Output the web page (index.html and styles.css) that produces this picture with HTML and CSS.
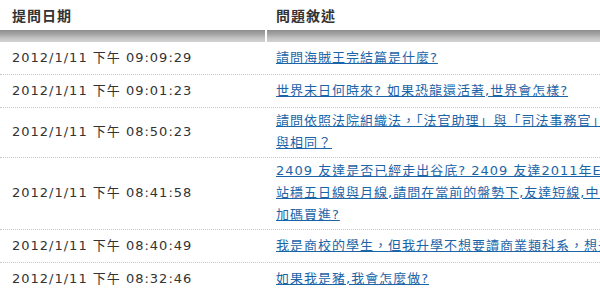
FILE: index.html
```html
<!DOCTYPE html>
<html lang="zh-Hant">
<head>
<meta charset="utf-8">
<title>問題列表</title>
<link rel="stylesheet" href="styles.css">
</head>
<body>
<div class="board">
  <div class="line head">
    <div class="cell-date">提問日期</div>
    <div class="cell-q">問題敘述</div>
  </div>
  <div class="line bar">
    <div class="bar-seg"></div>
    <div class="bar-seg"></div>
  </div>
  <div class="line row">
    <div class="cell-date">2012/1/11 下午 09:09:29</div>
    <div class="cell-q"><a href="#">請問海賊王完結篇是什麼?</a></div>
  </div>
  <div class="line row">
    <div class="cell-date">2012/1/11 下午 09:01:23</div>
    <div class="cell-q"><a href="#">世界末日何時來? 如果恐龍還活著,世界會怎樣?</a></div>
  </div>
  <div class="line row">
    <div class="cell-date">2012/1/11 下午 08:50:23</div>
    <div class="cell-q"><a href="#">請問依照法院組織法，「法官助理」與「司法事務官」的工作有何不同<br>與相同？</a></div>
  </div>
  <div class="line row">
    <div class="cell-date">2012/1/11 下午 08:41:58</div>
    <div class="cell-q"><a href="#">2409 友達是否已經走出谷底? 2409 友達2011年EPS虧損，近日股價<br>站穩五日線與月線,請問在當前的盤勢下,友達短線,中長線是否值得<br>加碼買進?</a></div>
  </div>
  <div class="line row">
    <div class="cell-date">2012/1/11 下午 08:40:49</div>
    <div class="cell-q"><a href="#">我是商校的學生，但我升學不想要讀商業類科系，想去讀設計</a></div>
  </div>
  <div class="line row">
    <div class="cell-date">2012/1/11 下午 08:32:46</div>
    <div class="cell-q"><a href="#">如果我是豬,我會怎麼做?</a></div>
  </div>
</div>
</body>
</html>
```
FILE: styles.css
```css
html, body {
  margin: 0;
  padding: 0;
  background: #ffffff;
}
body {
  width: 600px;
  height: 294px;
  overflow: hidden;
  font-family: "DejaVu Sans", "Noto Sans CJK TC", sans-serif;
  color: #333333;
}
.board {
  width: 1000px;
}
.line {
  display: grid;
  grid-template-columns: 265px 733px;
  column-gap: 2px;
}
.head {
  height: 30px;
  font-size: 14px;
  font-weight: bold;
  letter-spacing: 1px;
  line-height: 32px;
  color: #333333;
}
.head .cell-date {
  padding-left: 12px;
}
.head .cell-q {
  padding-left: 9px;
}
.bar {
  height: 12px;
}
.bar-seg {
  background: linear-gradient(to bottom, #8e8e8e 0%, #a4a4a4 35%, #c4c4c4 70%, #d2d2d2 100%);
}
.row {
  box-sizing: border-box;
  min-height: 33px;
  padding: 2px 0 3px;
  border-bottom: 1px dotted #c8c8c8;
  align-items: center;
  font-size: 13px;
  line-height: 22px;
  letter-spacing: 1px;
}
.row .cell-date {
  padding-left: 12px;
  color: #333333;
  white-space: nowrap;
}
.row .cell-q {
  padding-left: 9px;
  white-space: nowrap;
}
.row a {
  color: #1b64a8;
  text-decoration: underline;
}
```
